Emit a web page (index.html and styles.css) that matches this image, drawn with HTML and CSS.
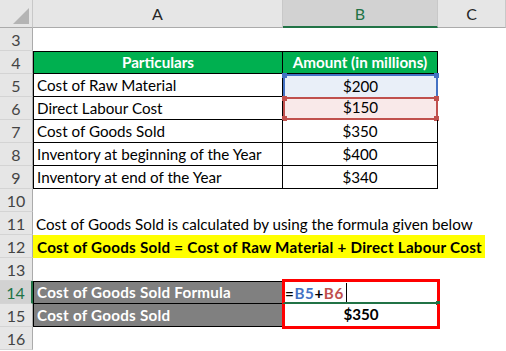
FILE: index.html
```html
<!DOCTYPE html>
<html>
<head>
<meta charset="utf-8">
<link rel="stylesheet" href="styles.css">
</head>
<body>
<div class="sheet">
  <div class="corner"><svg width="17" height="17" viewBox="0 0 17 17"><polygon points="16,0 16,16 0,16" fill="#b4b4b4"/></svg></div>
  <div class="colhead">A</div>
  <div class="colhead sel">B</div>
  <div class="colhead">C</div>

  <div class="rh">3</div><div class="c"></div><div class="c"></div><div class="c"></div>

  <div class="rh">4</div>
  <div class="c tb a top green">Particulars</div>
  <div class="c tb top green">Amount (in millions)</div>
  <div class="c"></div>

  <div class="rh">5</div>
  <div class="c tb a">Cost of Raw Material</div>
  <div class="c num refb">$200<span class="h hb tl"></span><span class="h hb tr"></span></div>
  <div class="c"></div>

  <div class="rh">6</div>
  <div class="c tb a">Direct Labour Cost</div>
  <div class="c num refr">$150<span class="h hr tl"></span><span class="h hr tr"></span><span class="h hr bl"></span><span class="h hr br"></span></div>
  <div class="c"></div>

  <div class="rh">7</div>
  <div class="c tb a">Cost of Goods Sold</div>
  <div class="c tb num">$350</div>
  <div class="c"></div>

  <div class="rh">8</div>
  <div class="c tb a">Inventory at beginning of the Year</div>
  <div class="c tb num">$400</div>
  <div class="c"></div>

  <div class="rh">9</div>
  <div class="c tb a">Inventory at end of the Year</div>
  <div class="c tb num">$340</div>
  <div class="c"></div>

  <div class="rh">10</div><div class="c"></div><div class="c"></div><div class="c"></div>

  <div class="rh">11</div>
  <div class="c span">Cost of Goods Sold is calculated by using the formula given below</div>

  <div class="rh">12</div>
  <div class="c span nopad"><span class="hl">Cost of Goods Sold = Cost of Raw Material + Direct Labour Cost</span></div>

  <div class="rh">13</div><div class="c"></div><div class="c"></div><div class="c"></div>

  <div class="rh sel">14</div>
  <div class="c tb a top gray">Cost of Goods Sold Formula</div>
  <div class="c fx"><span class="k">=</span><span class="r1">B5</span><span class="k">+</span><span class="r2">B6</span><span class="caret"></span><span class="fill"></span></div>
  <div class="c"></div>

  <div class="rh">15</div>
  <div class="c tb a gray">Cost of Goods Sold</div>
  <div class="c res">$350</div>
  <div class="c"></div>

  <div class="rh">16</div><div class="c"></div><div class="c"></div><div class="c"></div>
</div>
</body>
</html>
```
FILE: styles.css
```css
body {
  margin: 0;
  background: #ffffff;
  font-family: "Lato", "Liberation Sans", sans-serif;
}

.sheet {
  display: grid;
  grid-template-columns: 33px 250px 155px 68px;
  grid-template-rows: 28px;
  grid-auto-rows: 23px;
  width: 506px;
}

.c {
  box-sizing: border-box;
  display: flex;
  align-items: flex-end;
  padding: 0 3px 2px 3px;
  font-size: 15.2px;
  line-height: 18px;
  color: #000;
  white-space: nowrap;
  position: relative;
}

.corner {
  box-sizing: border-box;
  background: #e6e6e6;
  border-right: 1px solid #c8c8c8;
  border-bottom: 1px solid #ababab;
  display: flex;
  align-items: flex-end;
  justify-content: flex-end;
  padding: 0 2px 2px 0;
}

.colhead {
  box-sizing: border-box;
  background: #e6e6e6;
  border-right: 1px solid #c8c8c8;
  border-bottom: 1px solid #ababab;
  display: flex;
  align-items: center;
  justify-content: center;
  font-size: 16px;
  color: #262626;
}

.colhead.sel {
  background: #d2d2d2;
  border-bottom: 2px solid #217346;
  color: #217346;
}

.rh {
  box-sizing: border-box;
  background: #e6e6e6;
  border-right: 1px solid #ababab;
  border-bottom: 1px solid #d4d4d4;
  display: flex;
  align-items: center;
  justify-content: center;
  font-size: 16px;
  color: #444;
}

.rh.sel {
  background: #d2d2d2;
  border-right: 2px solid #217346;
  color: #217346;
}

.tb {
  border-right: 1px solid #000;
  border-bottom: 1px solid #000;
}

.tb.a {
  border-left: 1px solid #000;
}

.top {
  border-top: 1px solid #000;
}

.green {
  background: #00b050;
  color: #fff;
  font-weight: bold;
  justify-content: center;
}

.num {
  justify-content: center;
}

.refb {
  background: #e9eff8;
  border: 2px solid #4472c4;
  border-bottom: none;
}

.refr {
  background: #f9e9e9;
  border: 2px solid #c0504d;
}

.h {
  position: absolute;
  width: 5px;
  height: 5px;
}

.hb { background: #4472c4; }
.hr { background: #c0504d; }
.tl { left: -3px; top: -3px; }
.tr { right: -3px; top: -3px; }
.bl { left: -3px; bottom: -3px; }
.br { right: -3px; bottom: -3px; }

.span {
  grid-column: 2 / 5;
}

.nopad {
  padding: 0;
  align-items: stretch;
}

.hl {
  background: #ffff00;
  font-weight: bold;
  letter-spacing: 0.25px;
  padding: 3px 3px 2px 4px;
}

.gray {
  background: #808080;
  color: #fff;
  font-weight: bold;
  letter-spacing: 0.25px;
}

.fx {
  border: 3px solid #ff0000;
  border-bottom: 2px solid #217346;
  font-weight: bold;
  letter-spacing: 0.6px;
  padding: 0 0 0 0;
  margin: -2px -2px 0 -1px;
}

.k { color: #000; }
.r1 { color: #4472c4; }
.r2 { color: #c0504d; }

.caret {
  display: inline-block;
  width: 1px;
  height: 19px;
  background: #000;
  margin-left: 2px;
}

.fill {
  position: absolute;
  right: -3px;
  bottom: -3px;
  width: 4px;
  height: 4px;
  background: #217346;
}

.res {
  border: 3px solid #ff0000;
  border-top: none;
  font-weight: bold;
  justify-content: center;
  padding-bottom: 3px;
  margin: 0 -2px -2px -1px;
}
```
